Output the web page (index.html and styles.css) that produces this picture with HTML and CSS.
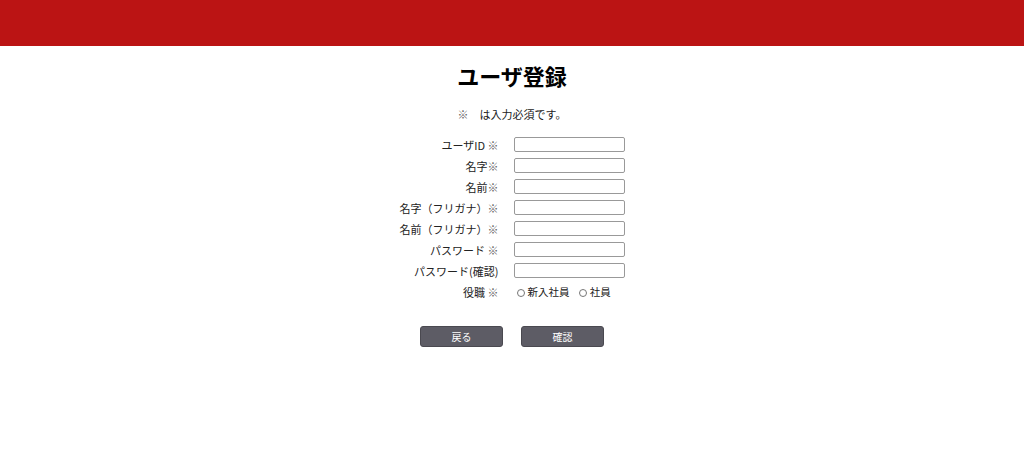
FILE: index.html
```html
<!doctype html>
<html lang="ja">
<head>
  <meta charset="utf-8">
  <meta name="viewport" content="width=device-width, initial-scale=1.0">
  <title>ユーザ登録</title>
  <link rel="stylesheet" href="styles.css">
</head>
<body>

<header class="top-bar"></header>

<main class="content">
  <h1>ユーザ登録</h1>
  <p class="note"><span class="mark">※</span>　は入力必須です。</p>

  <form class="reg-form">
    <table class="reg-table">
      <tr>
        <td class="label">ユーザID <span class="mark">※</span></td>
        <td><input type="text" class="field"></td>
      </tr>
      <tr>
        <td class="label">名字<span class="mark">※</span></td>
        <td><input type="text" class="field"></td>
      </tr>
      <tr>
        <td class="label">名前<span class="mark">※</span></td>
        <td><input type="text" class="field"></td>
      </tr>
      <tr>
        <td class="label">名字（フリガナ）<span class="mark">※</span></td>
        <td><input type="text" class="field"></td>
      </tr>
      <tr>
        <td class="label">名前（フリガナ）<span class="mark">※</span></td>
        <td><input type="text" class="field"></td>
      </tr>
      <tr>
        <td class="label">パスワード <span class="mark">※</span></td>
        <td><input type="password" class="field"></td>
      </tr>
      <tr>
        <td class="label">パスワード(確認)</td>
        <td><input type="password" class="field"></td>
      </tr>
      <tr>
        <td class="label">役職 <span class="mark">※</span></td>
        <td class="roles">
          <label><input type="radio" name="role">新入社員</label>
          <label><input type="radio" name="role">社員</label>
        </td>
      </tr>
    </table>

    <div class="buttons">
      <button type="button" class="btn">戻る</button>
      <button type="button" class="btn">確認</button>
    </div>
  </form>
</main>

</body>
</html>
```

FILE: styles.css
```css
body {
  margin: 0;
  padding: 0;
  font-family: "Noto Sans CJK JP", "Liberation Sans", sans-serif;
  color: #222;
  background: #fff;
}

.top-bar {
  height: 46px;
  background: #bb1414;
}

.content {
  text-align: center;
}

h1 {
  font-size: 22px;
  font-weight: bold;
  color: #000;
  margin: 14px 0 0;
  line-height: 30px;
}

.note {
  font-size: 11px;
  margin: 16px 0 0;
  line-height: 16px;
}

.mark {
  color: #666;
}

.reg-table {
  margin: 12px auto 0;
  border-collapse: collapse;
  font-size: 11px;
}

.reg-table td {
  padding: 0;
  height: 21px;
  vertical-align: middle;
}

.reg-table .label {
  text-align: right;
  padding-right: 14px;
  white-space: nowrap;
}

.field {
  display: block;
  box-sizing: border-box;
  width: 111px;
  height: 15px;
  margin: 0 0 0 1px;
  padding: 0 2px;
  border: 1px solid #999;
  border-radius: 2px;
  font-size: 11px;
}

.roles {
  text-align: left;
  font-size: 10.5px;
}

.roles label {
  margin-right: 3px;
}

.roles input {
  width: 8px;
  height: 8px;
  margin: 0 3px 0 4px;
  vertical-align: -1px;
}

.buttons {
  display: flex;
  justify-content: center;
  gap: 18px;
  margin-top: 24px;
}

.btn {
  width: 83px;
  height: 21px;
  padding: 0;
  border: 1px solid #4a4950;
  border-radius: 3px;
  background: #5d5c65;
  color: #fff;
  font-family: inherit;
  font-size: 10px;
}
```
